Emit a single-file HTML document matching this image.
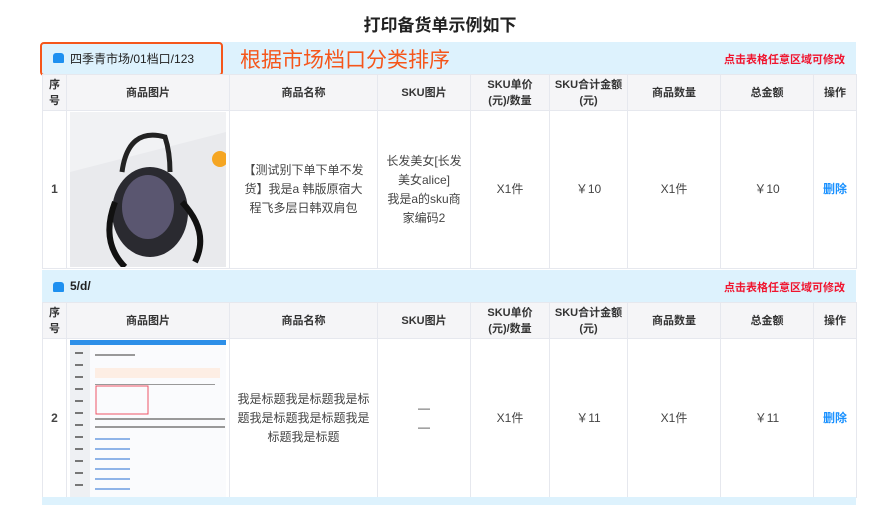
<!DOCTYPE html>
<html><head><meta charset="utf-8"><style>
*{margin:0;padding:0;box-sizing:border-box}
body{width:880px;height:505px;background:#fff;font-family:"Liberation Sans","Noto Sans CJK SC",sans-serif;position:relative;overflow:hidden;color:#333}
.title{position:absolute;top:11px;left:0;width:880px;text-align:center;font-size:17px;font-weight:bold;color:#222}
.bar{position:absolute;left:42px;width:814px;height:32px;background:#ddf2fd;font-size:12px;color:#222}
.bar .ic{position:absolute;left:11px;top:11px;width:11px;height:10px;background:#1e90f0;border-radius:3px 3px 1px 1px}
.bar .nm{position:absolute;left:28px;top:8px}
.bar .hint{position:absolute;right:11px;top:9px;color:#f0142e;font-size:11px;font-weight:bold}
table{position:absolute;left:42px;width:814px;border-collapse:collapse;table-layout:fixed;font-size:12px}
td,th{border:1px solid #e6e8ee;text-align:center;vertical-align:middle}
th{background:#f5f5f7;font-weight:bold;height:36px;font-size:11px;line-height:16px;color:#333}
td{color:#444;line-height:19px}
.img{width:156px;height:155px;margin:0 auto;display:block}
a{color:#1890ff;font-weight:bold;text-decoration:none}
</style></head><body>
<div class="title">打印备货单示例如下</div>

<div class="bar" style="top:42px"><div class="ic"></div><div class="nm">四季青市场/01档口/123</div><div class="hint">点击表格任意区域可修改</div></div>
<div style="position:absolute;left:40px;top:42px;width:183px;height:34px;border:2px solid #f5561b;border-radius:4px"></div>
<div style="position:absolute;left:240px;top:44px;font-size:21px;color:#f5561b">根据市场档口分类排序</div>
<table style="top:74px">
<colgroup><col style="width:24px"><col style="width:163px"><col style="width:148px"><col style="width:93px"><col style="width:79px"><col style="width:78px"><col style="width:93px"><col style="width:93px"><col style="width:43px"></colgroup>
<tr><th>序<br>号</th><th>商品图片</th><th>商品名称</th><th>SKU图片</th><th>SKU单价<br>(元)/数量</th><th>SKU合计金额<br>(元)</th><th>商品数量</th><th>总金额</th><th>操作</th></tr>
<tr style="height:158px"><td style="font-weight:bold">1</td><td><svg class="img" viewBox="0 0 156 155"><rect width="156" height="155" fill="#f1f2f4"/><polygon points="0,60 156,20 156,155 0,155" fill="#e9eaed"/><circle cx="150" cy="47" r="8" fill="#f5a623"/><path d="M52 60 Q58 15 95 25 Q100 40 100 60" fill="none" stroke="#222" stroke-width="5"/><ellipse cx="80" cy="100" rx="38" ry="45" fill="#2a2a30"/><ellipse cx="78" cy="95" rx="26" ry="32" fill="#5a5670"/><path d="M112 90 Q140 120 125 150 M45 90 Q30 130 55 155" fill="none" stroke="#111" stroke-width="6"/></svg></td><td style="padding:0 12px">【测试别下单下单不发货】我是a 韩版原宿大程飞多层日韩双肩包</td><td style="padding:0 5px">长发美女[长发美女alice]<br>我是a的sku商家编码2</td><td>X1件</td><td>￥10</td><td>X1件</td><td>￥10</td><td><a>删除</a></td></tr>
</table>

<div class="bar" style="top:270px"><div class="ic" style="top:12px"></div><div class="nm" style="top:9px;font-weight:bold">5/d/</div><div class="hint">点击表格任意区域可修改</div></div>
<table style="top:302px">
<colgroup><col style="width:24px"><col style="width:163px"><col style="width:148px"><col style="width:93px"><col style="width:79px"><col style="width:78px"><col style="width:93px"><col style="width:93px"><col style="width:43px"></colgroup>
<tr><th>序<br>号</th><th>商品图片</th><th>商品名称</th><th>SKU图片</th><th>SKU单价<br>(元)/数量</th><th>SKU合计金额<br>(元)</th><th>商品数量</th><th>总金额</th><th>操作</th></tr>
<tr style="height:159px"><td style="font-weight:bold">2</td><td><svg class="img" viewBox="0 0 156 157" style="height:157px"><rect width="156" height="157" fill="#fafbfd"/><rect width="156" height="5" fill="#2d8fe8"/><rect x="0" y="5" width="20" height="152" fill="#eef0f3"/><rect x="25" y="28" width="125" height="10" fill="#fdeee4"/><rect x="26" y="46" width="52" height="28" fill="none" stroke="#e56" stroke-width="1"/><g fill="#999"><rect x="25" y="14" width="40" height="2"/><rect x="25" y="44" width="120" height="1"/><rect x="25" y="78" width="130" height="2"/><rect x="25" y="86" width="130" height="2"/></g><g fill="#8fb4e8"><rect x="25" y="98" width="35" height="2"/><rect x="25" y="108" width="35" height="2"/><rect x="25" y="118" width="35" height="2"/><rect x="25" y="128" width="35" height="2"/><rect x="25" y="138" width="35" height="2"/><rect x="25" y="148" width="35" height="2"/></g><g fill="#777"><rect x="5" y="12" width="8" height="2"/><rect x="5" y="24" width="8" height="2"/><rect x="5" y="36" width="8" height="2"/><rect x="5" y="48" width="8" height="2"/><rect x="5" y="60" width="8" height="2"/><rect x="5" y="72" width="8" height="2"/><rect x="5" y="84" width="8" height="2"/><rect x="5" y="96" width="8" height="2"/><rect x="5" y="108" width="8" height="2"/><rect x="5" y="120" width="8" height="2"/><rect x="5" y="132" width="8" height="2"/><rect x="5" y="144" width="8" height="2"/></g></svg></td><td style="padding:0 6px">我是标题我是标题我是标题我是标题我是标题我是标题我是标题</td><td>—<br>—</td><td>X1件</td><td>￥11</td><td>X1件</td><td>￥11</td><td><a>删除</a></td></tr>
</table>
<div style="position:absolute;left:42px;top:497px;width:814px;height:8px;background:#ddf2fd"></div>
</body></html>
